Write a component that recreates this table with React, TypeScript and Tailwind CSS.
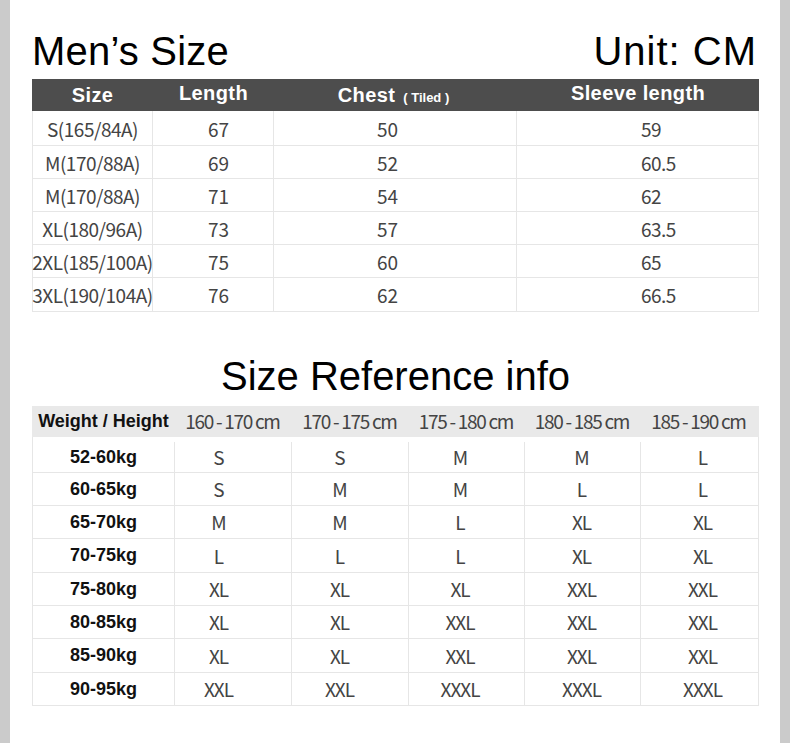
const sizeRows = [
  { size: "S(165/84A)", length: "67", chest: "50", sleeve: "59", h: "h-[35px]" },
  { size: "M(170/88A)", length: "69", chest: "52", sleeve: "60.5", h: "h-[33px]" },
  { size: "M(170/88A)", length: "71", chest: "54", sleeve: "62", h: "h-[33px]" },
  { size: "XL(180/96A)", length: "73", chest: "57", sleeve: "63.5", h: "h-[33px]" },
  { size: "2XL(185/100A)", length: "75", chest: "60", sleeve: "65", h: "h-[33px]" },
  { size: "3XL(190/104A)", length: "76", chest: "62", sleeve: "66.5", h: "h-[34px]" },
];

const heights = ["160 - 170 cm", "170 - 175 cm", "175 - 180 cm", "180 - 185 cm", "185 - 190 cm"];

const refRows = [
  { weight: "52-60kg", sizes: ["S", "S", "M", "M", "L"], h: "h-[36px] pt-[5px]" },
  { weight: "60-65kg", sizes: ["S", "M", "M", "L", "L"], h: "h-[33px]" },
  { weight: "65-70kg", sizes: ["M", "M", "L", "XL", "XL"], h: "h-[33px]" },
  { weight: "70-75kg", sizes: ["L", "L", "L", "XL", "XL"], h: "h-[34px]" },
  { weight: "75-80kg", sizes: ["XL", "XL", "XL", "XXL", "XXL"], h: "h-[33px]" },
  { weight: "80-85kg", sizes: ["XL", "XL", "XXL", "XXL", "XXL"], h: "h-[33px]" },
  { weight: "85-90kg", sizes: ["XL", "XL", "XXL", "XXL", "XXL"], h: "h-[34px]" },
  { weight: "90-95kg", sizes: ["XXL", "XXL", "XXXL", "XXXL", "XXXL"], h: "h-[33px]" },
];

// nudges so the values sit where the reference has them (not quite centred)
const refValueShift = ["pr-[29px]", "pr-[21px]", "pr-[13px]", "pr-[2px]", "pl-[6px]"];

const arial = "font-['Liberation_Sans',Arial,sans-serif]";
const cjk = "font-['Noto_Sans_CJK_SC','Noto_Sans',sans-serif]";

export default function App() {
  return (
    <div className="w-[790px] h-[743px] bg-[#cbcbcb] px-[10px]">
      <div className="h-full bg-white pl-[22px] pr-[21px] pt-[31px]">
        {/* Men's size title */}
        <div className={`flex justify-between items-start text-[40px] leading-[40px] text-black ${arial}`}>
          <h1 className="tracking-[0.2px]">Men’s Size</h1>
          <div className="tracking-[1px] mr-[2px]">Unit: CM</div>
        </div>

        {/* Size chart */}
        <div className="mt-[8px] border-l border-r border-[#e6e6e6]">
          <div className={`grid grid-cols-[121px_121px_243px_240px] h-[32px] bg-[#4d4d4d] text-white font-bold text-[20px] leading-[20px] tracking-[0.4px] -mx-px ${arial}`}>
            <div className="text-center pt-[6px]">Size</div>
            <div className="text-center pt-[4px]">Length</div>
            <div className="text-center pt-[6px] pr-[4px]">
              Chest <span className="text-[13px] tracking-normal ml-[2px]">( Tiled )</span>
            </div>
            <div className="text-center pt-[4px] pl-[2px]">Sleeve length</div>
          </div>
          {sizeRows.map((r, i) => (
            <div
              key={i}
              className={`grid grid-cols-[120px_121px_243px_241px] border-b border-[#e6e6e6] text-[19px] text-[#444] ${r.h} ${cjk}`}
            >
              <div className="flex items-center justify-center pt-[2px] border-r border-[#e6e6e6] tracking-[-0.5px]">{r.size}</div>
              <div className="flex items-center pt-[2px] pl-[55px] border-r border-[#e6e6e6]">{r.length}</div>
              <div className="flex items-center pt-[2px] pl-[103px] border-r border-[#e6e6e6]">{r.chest}</div>
              <div className="flex items-center pt-[2px] pl-[124px] tracking-[-0.5px]">{r.sleeve}</div>
            </div>
          ))}
        </div>

        {/* Reference title */}
        <h2 className={`mt-[44px] text-center text-[40px] leading-[40px] text-black ${arial}`}>Size Reference info</h2>

        {/* Weight / height table */}
        <div className="mt-[10px] border-l border-r border-[#e6e6e6]">
          <div className="grid grid-cols-[142px_117px_117px_116px_116px_117px] h-[31px] bg-[#e9e9e9] items-center -mx-px">
            <div className={`text-center text-[18px] font-bold text-[#111] pl-[1px] ${arial}`}>Weight / Height</div>
            {heights.map((h) => (
              <div key={h} className={`text-center text-[19px] text-[#444] tracking-[-1.3px] whitespace-nowrap ${cjk}`}>
                {h}
              </div>
            ))}
          </div>
          {refRows.map((r) => (
            <div
              key={r.weight}
              className={`grid grid-cols-[142px_117px_117px_116px_116px_117px] border-b border-[#e6e6e6] ${r.h}`}
            >
              <div className={`flex items-center justify-center border-r border-[#e6e6e6] text-[18px] font-bold text-[#111] ${arial}`}>
                {r.weight}
              </div>
              {r.sizes.map((s, j) => (
                <div
                  key={j}
                  className={`flex items-center justify-center pt-[1px] text-[19px] text-[#444] tracking-[-1px] ${j < 4 ? "border-r border-[#e6e6e6]" : ""} ${refValueShift[j]} ${cjk}`}
                >
                  {s}
                </div>
              ))}
            </div>
          ))}
        </div>
      </div>
    </div>
  );
}
